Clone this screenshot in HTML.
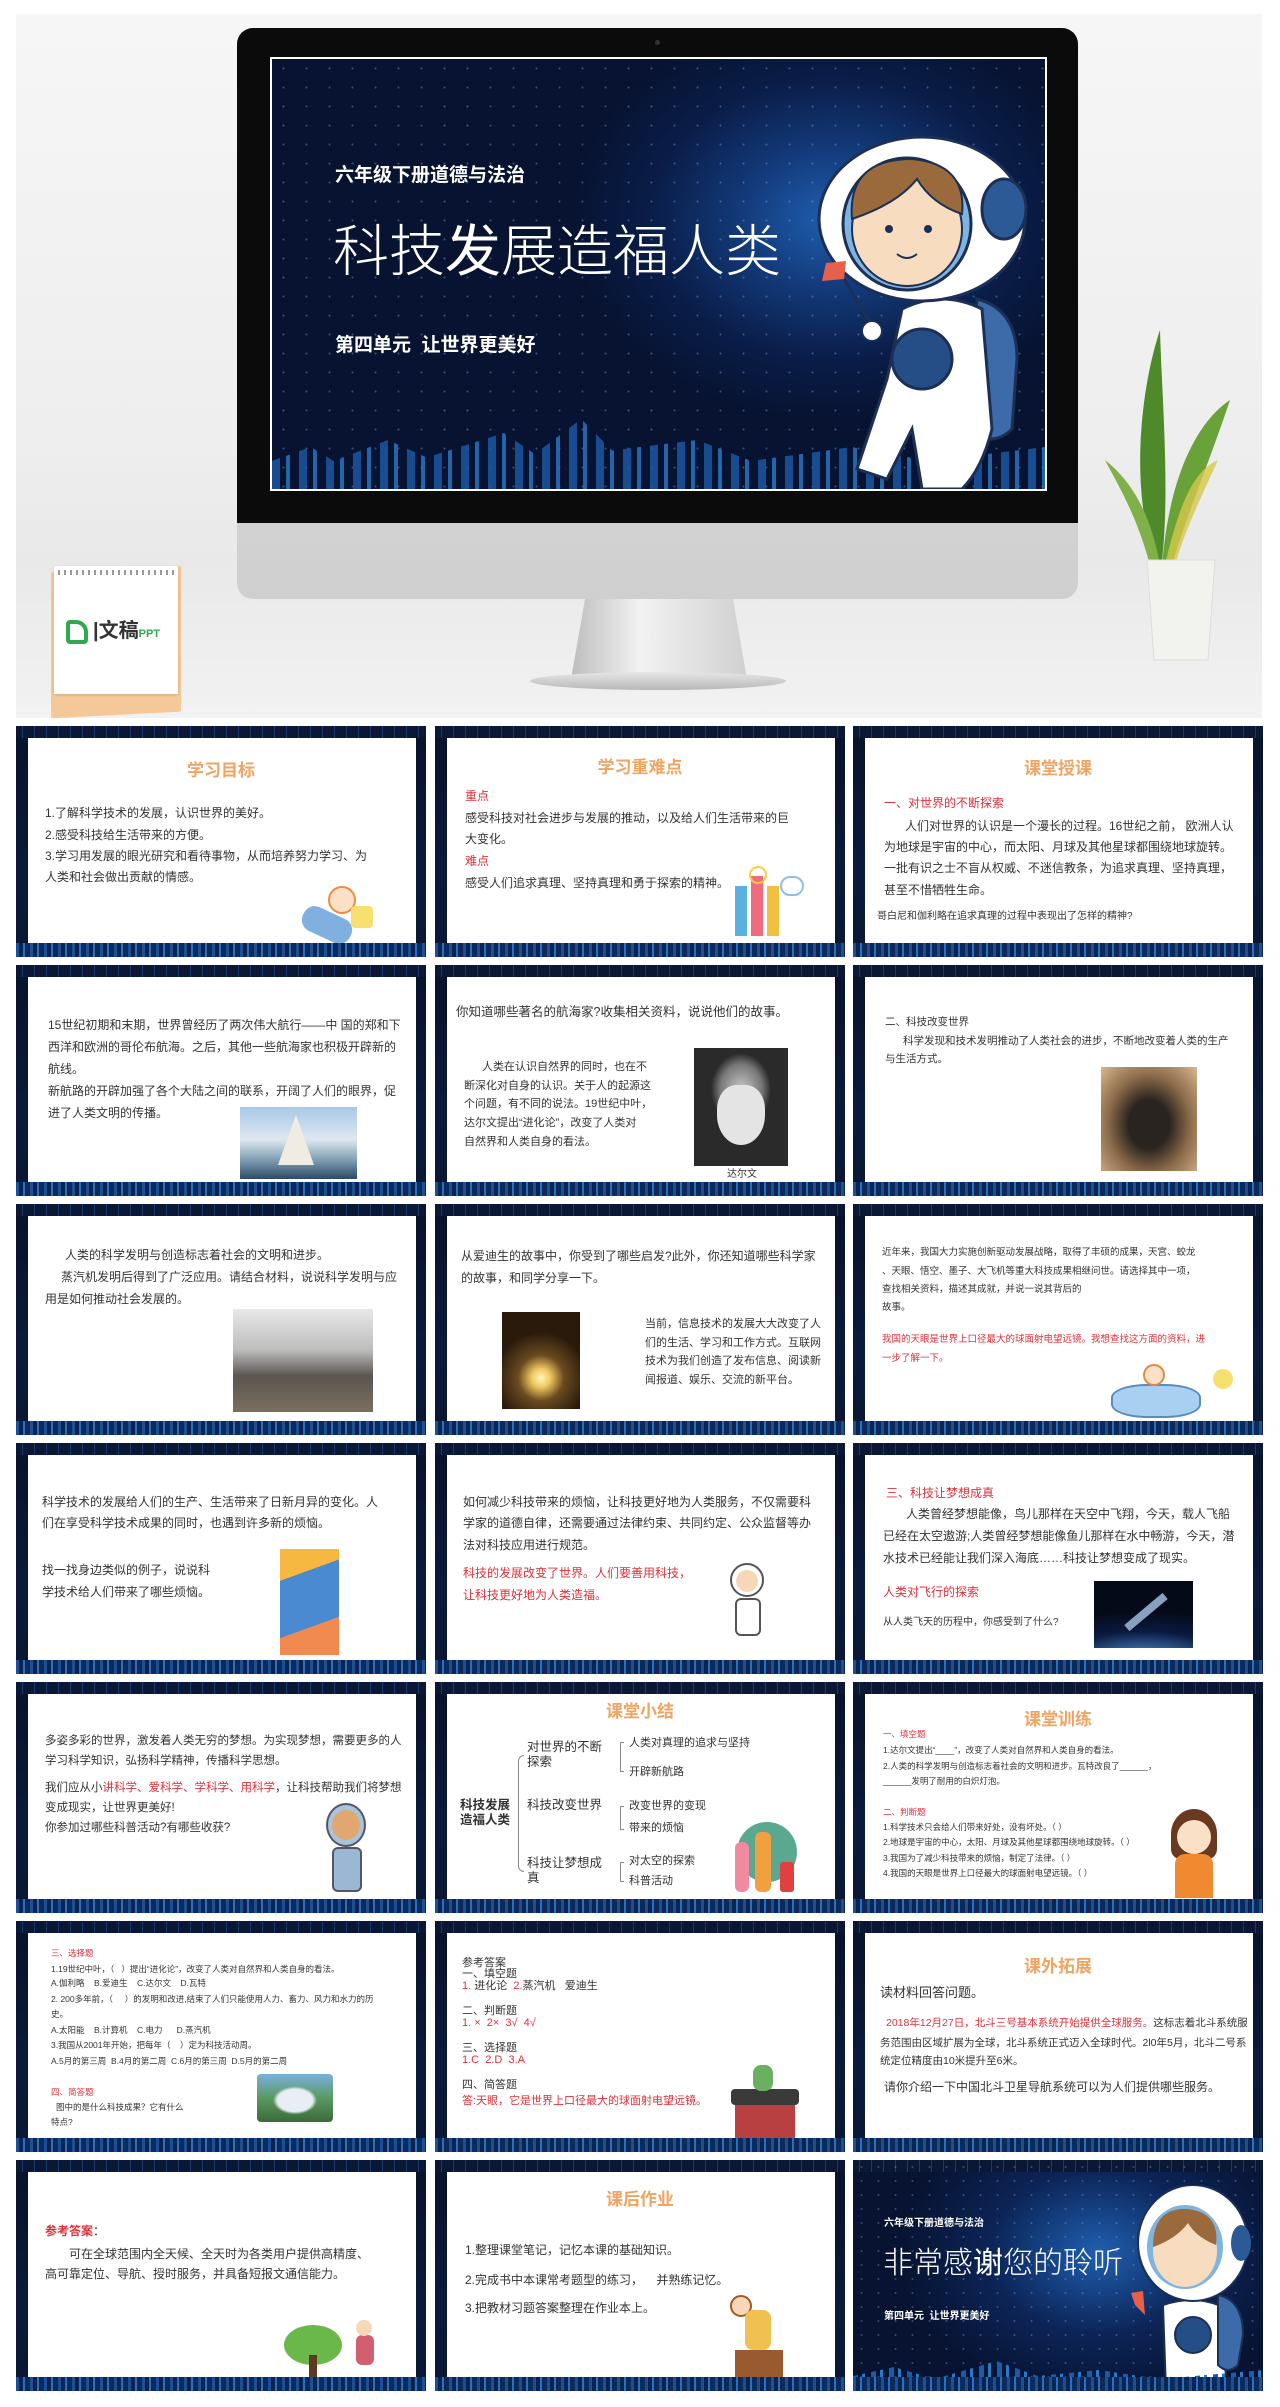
<!DOCTYPE html>
<html><head><meta charset="utf-8">
<style>
*{margin:0;padding:0;box-sizing:border-box}
body{width:1280px;height:2407px;background:#fff;position:relative;overflow:hidden;font-family:"Liberation Sans","Noto Sans CJK SC",sans-serif;color:#333}
.abs{position:absolute}
.hero{position:absolute;left:16px;top:14px;width:1246px;height:704px;background:linear-gradient(#f6f6f6 0%,#eeeeee 60%,#e9e9e9 78%,#f2f2f2 100%)}
.s{position:absolute;width:410px;height:231px;background:linear-gradient(#08122a,#0b1a3a 60%,#0a1834);overflow:hidden}
.s:before{content:"";position:absolute;left:0;right:0;top:0;height:12px;background:repeating-linear-gradient(90deg,#0a1836 0 6px,#1a3a70 6px 7px,#0a1836 7px 12px)}
.s:after{content:"";position:absolute;left:0;right:0;bottom:0;height:14px;background:repeating-linear-gradient(90deg,#1b4f96 0 3px,#0d2450 3px 7px,#2a70c0 7px 9px,#0e2a5a 9px 14px)}
.w{position:absolute;left:12px;top:12px;width:388px;height:208px;background:#fff}
.t{position:absolute;white-space:nowrap;line-height:16px;font-size:12px;color:#333}
.ti{position:absolute;left:0;width:410px;text-align:center;font-size:17px;font-weight:bold;color:#f0a462;line-height:20px}
.r{color:#e0303a}
.sm{font-size:10px}
.xs{font-size:8.5px}
</style></head><body>

<div class="hero"></div>
<div class="abs" style="left:51px;top:569px;width:130px;height:146px;background:#f5c89a;transform:skewY(-3deg);border-radius:2px"></div>
<div class="abs" style="left:54px;top:566px;width:124px;height:128px;background:#fff;box-shadow:0 1px 3px rgba(0,0,0,.15)"></div>
<div class="abs" style="left:58px;top:570px;width:116px;height:5px;background:repeating-linear-gradient(90deg,#999 0 2px,transparent 2px 6px)"></div>
<div class="abs" style="left:66px;top:620px;width:22px;height:24px;border:4px solid #2fa84f;border-radius:4px 12px 4px 4px"></div>
<div class="abs" style="left:93px;top:614px;font-size:20px;font-weight:bold;color:#333">|文稿<span style="font-size:11px;color:#2fa84f">PPT</span></div>
<svg class="abs" style="left:1100px;top:310px" width="140" height="360">
<path d="M55 250 C30 180 40 80 60 20 C62 90 70 180 62 250Z" fill="#4f8a2a"/>
<path d="M62 255 C70 160 100 110 130 90 C110 150 85 210 72 255Z" fill="#6aa23a"/>
<path d="M50 255 C35 200 15 170 5 150 C30 170 50 200 60 255Z" fill="#7fb04a"/>
<path d="M65 255 C80 190 95 160 118 150 C100 190 85 220 75 255Z" fill="#d6c84a" opacity=".8"/>
<path d="M47 250 L115 250 L108 350 L54 350Z" fill="#f2f2ee" stroke="#ddd"/>
</svg>
<div class="abs" style="left:237px;top:28px;width:841px;height:571px;border-radius:16px;background:linear-gradient(#e8e8e8,#cfcfcf)"></div>
<div class="abs" style="left:237px;top:28px;width:841px;height:495px;border-radius:16px 16px 0 0;background:#0b0b0b"></div>
<div class="abs" style="left:655px;top:40px;width:5px;height:5px;border-radius:50%;background:#333"></div>
<div class="abs" style="left:571px;top:599px;width:176px;height:80px;background:linear-gradient(90deg,#bdbdbd,#f2f2f2 40%,#d0d0d0);clip-path:polygon(8% 0,92% 0,100% 100%,0 100%)"></div>
<div class="abs" style="left:530px;top:672px;width:256px;height:18px;border-radius:50%;background:linear-gradient(#e6e6e6,#b8b8b8)"></div>
<div class="abs" style="left:270px;top:57px;width:777px;height:434px;background:#fff"></div>
<div class="abs" style="left:272px;top:59px;width:773px;height:430px;overflow:hidden;background:radial-gradient(ellipse 260px 200px at 560px 160px,#1f5fb0 0%,#133a7a 35%,#0a1d48 70%,#071331 100%)">
 <div class="abs" style="left:0;top:0;width:773px;height:430px;background-image:radial-gradient(#8fb8ff 1px,transparent 1.3px);background-size:23px 19px;opacity:.35"></div>
 <div class="abs" style="left:0;bottom:0;width:773px;height:70px;background:repeating-linear-gradient(90deg,#1d5ba8 0 8px,transparent 8px 14px,#2a78c8 14px 18px,transparent 18px 27px);clip-path:polygon(0 60%,5% 40%,8% 60%,15% 30%,20% 55%,30% 20%,34% 50%,40% 0,44% 45%,55% 30%,62% 60%,75% 40%,85% 60%,100% 40%,100% 100%,0 100%);opacity:.8"></div>
 <div class="abs" style="left:63px;top:105px;color:#fff;font-size:19px;font-weight:bold;line-height:24px">六年级下册道德与法治</div>
 <div class="abs" style="left:61px;top:160px;color:#fff;font-size:56px;line-height:66px;font-weight:300;white-space:nowrap">科技<b>发</b>展造福人类</div>
 <div class="abs" style="left:63px;top:275px;color:#fff;font-size:19px;font-weight:bold;line-height:24px">第四单元&nbsp; 让世界更美好</div>
 <svg class="abs" style="left:500px;top:0" width="273" height="430">
  <path d="M205 240 q40 10 40 60 l-5 70 q-20 20 -45 0z" fill="#3d6aa8" stroke="#1c2f55" stroke-width="3"/>
  <path d="M130 250 q40 -20 80 0 l10 120 q-10 40 -30 60 l-40 0 l-10 -60 l-25 50 l-30 -10 l30 -90z" fill="#fff" stroke="#1c2f55" stroke-width="3"/>
  <circle cx="150" cy="300" r="30" fill="#264e86" stroke="#1c2f55" stroke-width="3"/>
  <ellipse cx="150" cy="160" rx="103" ry="82" fill="#fff" stroke="#1c2f55" stroke-width="3"/>
  <ellipse cx="232" cy="150" rx="22" ry="30" fill="#2c5a96" stroke="#1c2f55" stroke-width="3"/>
  <ellipse cx="135" cy="165" rx="64" ry="66" fill="#7fb3e0" stroke="#1c2f55" stroke-width="3"/>
  <ellipse cx="135" cy="170" rx="55" ry="57" fill="#f7dcc0" stroke="#1c2f55" stroke-width="2"/>
  <path d="M80 160 q-5 -60 60 -60 q55 5 50 55 q-30 -10 -45 -35 q-20 25 -65 40z" fill="#9a6a3c" stroke="#1c2f55" stroke-width="2"/>
  <circle cx="117" cy="170" r="4" fill="#1c2f55"/><circle cx="156" cy="170" r="4" fill="#1c2f55"/>
  <path d="M125 195 q10 8 20 0" stroke="#1c2f55" stroke-width="2" fill="none"/>
  <path d="M102 270 l-30 -50" stroke="#1c2f55" stroke-width="3"/>
  <path d="M72 220 l-22 2 l4 -18 l20 -2z" fill="#e8604a"/>
  <circle cx="100" cy="272" r="10" fill="#fff" stroke="#1c2f55" stroke-width="2"/>
 </svg>
</div>

<div class="s" style="left:16px;top:726px"><div class="w"></div>
 <div class="ti" style="top:35px">学习目标</div>
 <div class="t" style="left:29px;top:79px">1.了解科学技术的发展，认识世界的美好。</div>
 <div class="t" style="left:29px;top:101px">2.感受科技给生活带来的方便。</div>
 <div class="t" style="left:29px;top:122px">3.学习用发展的眼光研究和看待事物，从而培养努力学习、为</div>
 <div class="t" style="left:29px;top:143px">人类和社会做出贡献的情感。</div>
 <div class="abs" style="left:285px;top:186px;width:52px;height:26px;background:#7fb0e0;border-radius:12px;transform:rotate(25deg)"></div>
 <div class="abs" style="left:312px;top:160px;width:28px;height:28px;background:#fbe0c8;border-radius:50%;border:2px solid #f08a40"></div>
 <div class="abs" style="left:335px;top:180px;width:22px;height:22px;background:#f8e070;border-radius:4px"></div>
</div>
<div class="s" style="left:435px;top:726px"><div class="w"></div>
 <div class="ti" style="top:32px">学习重难点</div>
 <div class="t r" style="left:30px;top:62px">重点</div>
 <div class="t" style="left:30px;top:84px">感受科技对社会进步与发展的推动，以及给人们生活带来的巨</div>
 <div class="t" style="left:30px;top:105px">大变化。</div>
 <div class="t r" style="left:30px;top:127px">难点</div>
 <div class="t" style="left:30px;top:149px">感受人们追求真理、坚持真理和勇于探索的精神。</div>
 <div class="abs" style="left:300px;top:160px;width:12px;height:50px;background:#5ab0e0"></div>
 <div class="abs" style="left:316px;top:150px;width:12px;height:60px;background:#f06a80"></div>
 <div class="abs" style="left:332px;top:160px;width:12px;height:50px;background:#f0c040"></div>
 <div class="abs" style="left:345px;top:150px;width:24px;height:20px;border:2px solid #8ac0e8;border-radius:10px"></div>
 <div class="abs" style="left:314px;top:140px;width:18px;height:18px;border:2px solid #f5d040;border-radius:50%"></div>
</div>
<div class="s" style="left:853px;top:726px"><div class="w"></div>
 <div class="ti" style="top:33px">课堂授课</div>
 <div class="t r" style="left:31px;top:69px">一、对世界的不断探索</div>
 <div class="t" style="left:52px;top:92px">人们对世界的认识是一个漫长的过程。16世纪之前， 欧洲人认</div>
 <div class="t" style="left:31px;top:113px">为地球是宇宙的中心，而太阳、月球及其他星球都围绕地球旋转。</div>
 <div class="t" style="left:31px;top:134px">一批有识之士不盲从权威、不迷信教条，为追求真理、坚持真理，</div>
 <div class="t" style="left:31px;top:156px">甚至不惜牺牲生命。</div>
 <div class="t sm" style="left:24px;top:183px">哥白尼和伽利略在追求真理的过程中表现出了怎样的精神?</div>
</div>

<div class="s" style="left:16px;top:965px"><div class="w"></div>
 <div class="t" style="left:32px;top:52px">15世纪初期和末期，世界曾经历了两次伟大航行——中 国的郑和下</div>
 <div class="t" style="left:32px;top:74px">西洋和欧洲的哥伦布航海。之后，其他一些航海家也积极开辟新的</div>
 <div class="t" style="left:32px;top:96px">航线。</div>
 <div class="t" style="left:32px;top:118px">新航路的开辟加强了各个大陆之间的联系，开阔了人们的眼界，促</div>
 <div class="t" style="left:32px;top:140px">进了人类文明的传播。</div>
 <div class="abs" style="left:224px;top:142px;width:117px;height:72px;background:linear-gradient(#a8c8e8,#dfe8f0 45%,#7a9ab0 75%,#2d4a66)"></div>
 <div class="abs" style="left:262px;top:150px;width:36px;height:50px;background:#f0ece4;clip-path:polygon(50% 0,100% 100%,0 100%)"></div>
</div>
<div class="s" style="left:435px;top:965px"><div class="w"></div>
 <div class="t" style="left:21px;top:39px;font-size:12.5px">你知道哪些著名的航海家?收集相关资料，说说他们的故事。</div>
 <div class="t" style="left:47px;top:94px;font-size:11px">人类在认识自然界的同时，也在不</div>
 <div class="t" style="left:29px;top:113px;font-size:11px">断深化对自身的认识。关于人的起源这</div>
 <div class="t" style="left:29px;top:131px;font-size:11px">个问题，有不同的说法。19世纪中叶，</div>
 <div class="t" style="left:29px;top:150px;font-size:11px">达尔文提出“进化论”，改变了人类对</div>
 <div class="t" style="left:29px;top:169px;font-size:11px">自然界和人类自身的看法。</div>
 <div class="abs" style="left:259px;top:83px;width:94px;height:118px;background:radial-gradient(ellipse 30px 36px at 50% 35%,#c8c8c8,#777 70%,#2a2a2a 100%)"></div>
 <div class="abs" style="left:282px;top:120px;width:48px;height:60px;background:#e4e4e4;border-radius:40% 40% 50% 50%"></div>
 <div class="t sm" style="left:292px;top:202px">达尔文</div>
</div>
<div class="s" style="left:853px;top:965px"><div class="w"></div>
 <div class="t" style="left:32px;top:49px;font-size:10.5px">二、科技改变世界</div>
 <div class="t" style="left:50px;top:68px;font-size:10.5px">科学发现和技术发明推动了人类社会的进步，不断地改变着人类的生产</div>
 <div class="t" style="left:32px;top:86px;font-size:10.5px">与生活方式。</div>
 <div class="abs" style="left:248px;top:102px;width:96px;height:104px;background:radial-gradient(ellipse at 50% 55%,#2a2420 30%,#8a6a48 60%,#d8b890 100%)"></div>
</div>

<div class="s" style="left:16px;top:1204px"><div class="w"></div>
 <div class="t" style="left:49px;top:43px">人类的科学发明与创造标志着社会的文明和进步。</div>
 <div class="t" style="left:45px;top:65px">蒸汽机发明后得到了广泛应用。请结合材料，说说科学发明与应</div>
 <div class="t" style="left:29px;top:87px">用是如何推动社会发展的。</div>
 <div class="abs" style="left:217px;top:105px;width:140px;height:103px;background:linear-gradient(#e8e8e8,#bcbcbc 40%,#5a5550 65%,#7a7060)"></div>
</div>
<div class="s" style="left:435px;top:1204px"><div class="w"></div>
 <div class="t" style="left:26px;top:44px;font-size:12px">从爱迪生的故事中，你受到了哪些启发?此外，你还知道哪些科学家</div>
 <div class="t" style="left:26px;top:66px;font-size:12px">的故事，和同学分享一下。</div>
 <div class="abs" style="left:67px;top:108px;width:78px;height:97px;background:radial-gradient(circle at 50% 68%,#fff6c0 0,#f0c860 12%,#6a4a20 30%,#2a1a0c 60%)"></div>
 <div class="t" style="left:210px;top:112px;font-size:11px">当前，信息技术的发展大大改变了人</div>
 <div class="t" style="left:210px;top:131px;font-size:11px">们的生活、学习和工作方式。互联网</div>
 <div class="t" style="left:210px;top:149px;font-size:11px">技术为我们创造了发布信息、阅读新</div>
 <div class="t" style="left:210px;top:168px;font-size:11px">闻报道、娱乐、交流的新平台。</div>
</div>
<div class="s" style="left:853px;top:1204px"><div class="w"></div>
 <div class="t sm" style="left:29px;top:41px;font-size:9.5px">近年来，我国大力实施创新驱动发展战略，取得了丰硕的成果，天宫、蛟龙</div>
 <div class="t sm" style="left:29px;top:60px;font-size:9.5px">、天眼、悟空、墨子、大飞机等重大科技成果相继问世。请选择其中一项，</div>
 <div class="t sm" style="left:29px;top:78px;font-size:9.5px">查找相关资料，描述其成就，并说一说其背后的</div>
 <div class="t sm" style="left:29px;top:96px;font-size:9.5px">故事。</div>
 <div class="t sm r" style="left:29px;top:128px;font-size:9.5px">我国的天眼是世界上口径最大的球面射电望远镜。我想查找这方面的资料，进</div>
 <div class="t sm r" style="left:29px;top:147px;font-size:9.5px">一步了解一下。</div>
 <div class="abs" style="left:258px;top:180px;width:90px;height:34px;background:#a8d0f0;border-radius:40%;border:2px solid #5a8ac0"></div>
 <div class="abs" style="left:290px;top:160px;width:22px;height:22px;background:#fbe0c8;border-radius:50%;border:2px solid #e08a40"></div>
 <div class="abs" style="left:360px;top:165px;width:20px;height:20px;background:#f8e070;border-radius:50%"></div>
</div>

<div class="s" style="left:16px;top:1443px"><div class="w"></div>
 <div class="t" style="left:26px;top:51px;font-size:12px">科学技术的发展给人们的生产、生活带来了日新月异的变化。人</div>
 <div class="t" style="left:26px;top:72px;font-size:12px">们在享受科学技术成果的同时，也遇到许多新的烦恼。</div>
 <div class="t" style="left:26px;top:119px">找一找身边类似的例子，说说科</div>
 <div class="t" style="left:26px;top:141px">学技术给人们带来了哪些烦恼。</div>
 <div class="abs" style="left:264px;top:106px;width:59px;height:106px;background:linear-gradient(160deg,#f6b840 0 25%,#4a8ad0 25% 70%,#f08a50 70%)"></div>
</div>
<div class="s" style="left:435px;top:1443px"><div class="w"></div>
 <div class="t" style="left:28px;top:51px;font-size:12px">如何减少科技带来的烦恼，让科技更好地为人类服务，不仅需要科</div>
 <div class="t" style="left:28px;top:72px;font-size:12px">学家的道德自律，还需要通过法律约束、共同约定、公众监督等办</div>
 <div class="t" style="left:28px;top:94px;font-size:12px">法对科技应用进行规范。</div>
 <div class="t r" style="left:28px;top:122px;font-size:12px">科技的发展改变了世界。人们要善用科技，</div>
 <div class="t r" style="left:28px;top:144px;font-size:12px">让科技更好地为人类造福。</div>
 <div class="abs" style="left:295px;top:120px;width:34px;height:34px;background:#fff;border:2px solid #555;border-radius:50%"></div>
 <div class="abs" style="left:301px;top:127px;width:22px;height:22px;background:#f6d8b8;border-radius:50%"></div>
 <div class="abs" style="left:300px;top:155px;width:26px;height:38px;background:#fff;border:2px solid #555;border-radius:6px"></div>
</div>
<div class="s" style="left:853px;top:1443px"><div class="w"></div>
 <div class="t r" style="left:33px;top:42px">三、科技让梦想成真</div>
 <div class="t" style="left:53px;top:63px">人类曾经梦想能像，鸟儿那样在天空中飞翔，今天，载人飞船</div>
 <div class="t" style="left:30px;top:85px">已经在太空遨游;人类曾经梦想能像鱼儿那样在水中畅游，今天，潜</div>
 <div class="t" style="left:30px;top:107px">水技术已经能让我们深入海底……科技让梦想变成了现实。</div>
 <div class="t r" style="left:30px;top:141px">人类对飞行的探索</div>
 <div class="t sm" style="left:30px;top:172px">从人类飞天的历程中，你感受到了什么?</div>
 <div class="abs" style="left:241px;top:138px;width:99px;height:67px;background:radial-gradient(ellipse 140px 50px at 50% 120%,#5a9ae0,#0a1a40 60%,#050a18)"></div>
 <div class="abs" style="left:268px;top:165px;width:50px;height:8px;background:#8aa0c0;transform:rotate(-40deg)"></div>
</div>

<div class="s" style="left:16px;top:1682px"><div class="w"></div>
 <div class="t" style="left:29px;top:51px;font-size:11.5px">多姿多彩的世界，激发着人类无穷的梦想。为实现梦想，需要更多的人</div>
 <div class="t" style="left:29px;top:71px;font-size:11.5px">学习科学知识，弘扬科学精神，传播科学思想。</div>
 <div class="t" style="left:29px;top:98px;font-size:11.5px">我们应从小<span class="r">讲科学、爱科学、学科学、用科学</span>，让科技帮助我们将梦想</div>
 <div class="t" style="left:29px;top:118px;font-size:11.5px">变成现实，让世界更美好!</div>
 <div class="t" style="left:29px;top:138px;font-size:11.5px">你参加过哪些科普活动?有哪些收获?</div>
 <div class="abs" style="left:310px;top:121px;width:40px;height:44px;background:#a8c4dc;border:2px solid #556;border-radius:50%"></div>
 <div class="abs" style="left:316px;top:128px;width:28px;height:30px;background:#e0a870;border-radius:50%"></div>
 <div class="abs" style="left:316px;top:165px;width:30px;height:45px;background:#9ab8d4;border:2px solid #556;border-radius:6px"></div>
</div>
<div class="s" style="left:435px;top:1682px"><div class="w"></div>
 <div class="ti" style="top:20px">课堂小结</div>
 <div class="t" style="left:25px;top:115px;font-weight:bold;font-size:12.5px">科技发展</div>
 <div class="t" style="left:25px;top:130px;font-weight:bold;font-size:12.5px">造福人类</div>
 <div class="abs" style="left:83px;top:73px;width:6px;height:117px;border:1px solid #888;border-right:none;border-radius:6px 0 0 6px"></div>
 <div class="t" style="left:92px;top:57px;font-size:12.5px">对世界的不断</div>
 <div class="t" style="left:92px;top:72px;font-size:12.5px">探索</div>
 <div class="t" style="left:92px;top:115px;font-size:12.5px">科技改变世界</div>
 <div class="t" style="left:92px;top:173px;font-size:12.5px">科技让梦想成</div>
 <div class="t" style="left:92px;top:188px;font-size:12.5px">真</div>
 <div class="abs" style="left:185px;top:60px;width:4px;height:30px;border:1px solid #888;border-right:none"></div>
 <div class="abs" style="left:185px;top:124px;width:4px;height:24px;border:1px solid #888;border-right:none"></div>
 <div class="abs" style="left:185px;top:180px;width:4px;height:20px;border:1px solid #888;border-right:none"></div>
 <div class="t" style="left:194px;top:53px;font-size:11px">人类对真理的追求与坚持</div>
 <div class="t" style="left:194px;top:82px;font-size:11px">开辟新航路</div>
 <div class="t" style="left:194px;top:116px;font-size:11px">改变世界的变现</div>
 <div class="t" style="left:194px;top:138px;font-size:11px">带来的烦恼</div>
 <div class="t" style="left:194px;top:171px;font-size:11px">对太空的探索</div>
 <div class="t" style="left:194px;top:191px;font-size:11px">科普活动</div>
 <div class="abs" style="left:302px;top:140px;width:60px;height:60px;background:#5aa890;border-radius:50%"></div>
 <div class="abs" style="left:300px;top:160px;width:14px;height:50px;background:#f08aa0;border-radius:6px"></div>
 <div class="abs" style="left:320px;top:150px;width:16px;height:60px;background:#f0a040;border-radius:6px"></div>
 <div class="abs" style="left:345px;top:180px;width:14px;height:30px;background:#e04040;border-radius:3px"></div>
</div>
<div class="s" style="left:853px;top:1682px"><div class="w"></div>
 <div class="ti" style="top:28px">课堂训练</div>
 <div class="t xs r" style="left:30px;top:44px">一、填空题</div>
 <div class="t xs" style="left:30px;top:60px">1.达尔文提出“____”，改变了人类对自然界和人类自身的看法。</div>
 <div class="t xs" style="left:30px;top:76px">2.人类的科学发明与创造标志着社会的文明和进步。瓦特改良了______，</div>
 <div class="t xs" style="left:30px;top:91px">______发明了耐用的白炽灯泡。</div>
 <div class="t xs r" style="left:30px;top:122px">二、判断题</div>
 <div class="t xs" style="left:30px;top:137px">1.科学技术只会给人们带来好处，没有坏处。（ ）</div>
 <div class="t xs" style="left:30px;top:152px">2.地球是宇宙的中心，太阳、月球及其他星球都围绕地球旋转。（ ）</div>
 <div class="t xs" style="left:30px;top:168px">3.我国为了减少科技带来的烦恼，制定了法律。（ ）</div>
 <div class="t xs" style="left:30px;top:183px">4.我国的天眼是世界上口径最大的球面射电望远镜。（ ）</div>
 <div class="abs" style="left:318px;top:127px;width:46px;height:50px;background:#6a3a20;border-radius:50% 50% 20% 20%"></div>
 <div class="abs" style="left:324px;top:138px;width:34px;height:34px;background:#fbe0c8;border-radius:50%"></div>
 <div class="abs" style="left:322px;top:172px;width:38px;height:44px;background:#f08a30;border-radius:10px 10px 0 0"></div>
</div>

<div class="s" style="left:16px;top:1921px"><div class="w"></div>
 <div class="t xs r" style="left:35px;top:24px">三、选择题</div>
 <div class="t xs" style="left:35px;top:40px">1.19世纪中叶，（&nbsp;&nbsp; ）提出“进化论”，改变了人类对自然界和人类自身的看法。</div>
 <div class="t xs" style="left:35px;top:54px">A.伽利略&nbsp;&nbsp;&nbsp; B.爱迪生&nbsp;&nbsp;&nbsp; C.达尔文&nbsp;&nbsp;&nbsp; D.瓦特</div>
 <div class="t xs" style="left:35px;top:70px">2. 200多年前，（&nbsp;&nbsp;&nbsp;&nbsp; ）的发明和改进,结束了人们只能使用人力、畜力、风力和水力的历</div>
 <div class="t xs" style="left:35px;top:85px">史。</div>
 <div class="t xs" style="left:35px;top:101px">A.太阳能&nbsp;&nbsp;&nbsp; B.计算机&nbsp;&nbsp;&nbsp; C.电力&nbsp;&nbsp;&nbsp;&nbsp;&nbsp; D.蒸汽机</div>
 <div class="t xs" style="left:35px;top:116px">3.我国从2001年开始，把每年（&nbsp;&nbsp;&nbsp; ）定为科技活动周。</div>
 <div class="t xs" style="left:35px;top:132px">A.5月的第三周&nbsp; B.4月的第二周&nbsp; C.6月的第三周&nbsp; D.5月的第二周</div>
 <div class="t xs r" style="left:35px;top:163px">四、简答题</div>
 <div class="t xs" style="left:40px;top:178px">图中的是什么科技成果？它有什么</div>
 <div class="t xs" style="left:35px;top:193px">特点?</div>
 <div class="abs" style="left:241px;top:153px;width:76px;height:48px;background:radial-gradient(ellipse 22px 14px at 50% 55%,#e8eef4 80%,transparent 100%),linear-gradient(#7ab0e0,#5a9a60 50%,#3a6a38);border-radius:4px"></div>
</div>
<div class="s" style="left:435px;top:1921px"><div class="w"></div>
 <div class="t" style="left:27px;top:34px;font-size:11px">参考答案</div>
 <div class="t" style="left:27px;top:45px;font-size:11px">一、填空题</div>
 <div class="t" style="left:27px;top:57px;font-size:11px"><span class="r">1.</span> 进化论&nbsp; <span class="r">2.</span>蒸汽机&nbsp;&nbsp; 爱迪生</div>
 <div class="t" style="left:27px;top:82px;font-size:11px">二、判断题</div>
 <div class="t r" style="left:27px;top:94px;font-size:11px">1. ×&nbsp; 2×&nbsp; 3√&nbsp; 4√</div>
 <div class="t" style="left:27px;top:119px;font-size:11px">三、选择题</div>
 <div class="t r" style="left:27px;top:131px;font-size:11px">1.C&nbsp; 2.D&nbsp; 3.A</div>
 <div class="t" style="left:27px;top:156px;font-size:11px">四、简答题</div>
 <div class="t r" style="left:27px;top:172px;font-size:11px">答:天眼，它是世界上口径最大的球面射电望远镜。</div>
 <div class="abs" style="left:300px;top:180px;width:60px;height:40px;background:#b84040;border-radius:4px"></div>
 <div class="abs" style="left:296px;top:168px;width:68px;height:16px;background:#3a3a3a;border-radius:4px"></div>
 <div class="abs" style="left:318px;top:144px;width:20px;height:26px;background:#6ab060;border-radius:8px"></div>
</div>
<div class="s" style="left:853px;top:1921px"><div class="w"></div>
 <div class="ti" style="top:36px">课外拓展</div>
 <div class="t" style="left:27px;top:64px;font-size:13px">读材料回答问题。</div>
 <div class="t" style="left:33px;top:94px;font-size:10.5px"><span class="r">2018年12月27日，北斗三号基本系统开始提供全球服务。</span>这标志着北斗系统服</div>
 <div class="t" style="left:27px;top:114px;font-size:10.5px">务范围由区域扩展为全球，北斗系统正式迈入全球时代。2l0年5月，北斗二号系</div>
 <div class="t" style="left:27px;top:132px;font-size:10.5px">统定位精度由10米提升至6米。</div>
 <div class="t" style="left:31px;top:158px;font-size:12px">请你介绍一下中国北斗卫星导航系统可以为人们提供哪些服务。</div>
</div>

<div class="s" style="left:16px;top:2160px"><div class="w"></div>
 <div class="t r" style="left:29px;top:63px;font-weight:bold">参考答案<span style="color:#333;font-weight:normal">：</span></div>
 <div class="t" style="left:53px;top:86px">可在全球范围内全天候、全天时为各类用户提供高精度、</div>
 <div class="t" style="left:29px;top:106px">高可靠定位、导航、授时服务，并具备短报文通信能力。</div>
 <div class="abs" style="left:268px;top:165px;width:58px;height:40px;background:#6ab84a;border-radius:50%"></div>
 <div class="abs" style="left:293px;top:195px;width:8px;height:36px;background:#5a3a20"></div>
 <div class="abs" style="left:340px;top:175px;width:18px;height:30px;background:#d06070;border-radius:6px"></div>
 <div class="abs" style="left:340px;top:160px;width:16px;height:16px;background:#f6d8b8;border-radius:50%"></div>
</div>
<div class="s" style="left:435px;top:2160px"><div class="w"></div>
 <div class="ti" style="top:30px">课后作业</div>
 <div class="t" style="left:30px;top:82px">1.整理课堂笔记，记忆本课的基础知识。</div>
 <div class="t" style="left:30px;top:112px">2.完成书中本课常考题型的练习，&nbsp;&nbsp;&nbsp; 并熟练记忆。</div>
 <div class="t" style="left:30px;top:140px">3.把教材习题答案整理在作业本上。</div>
 <div class="abs" style="left:295px;top:135px;width:22px;height:22px;background:#f6d8b8;border-radius:50%;border:2px solid #a05a20"></div>
 <div class="abs" style="left:310px;top:150px;width:26px;height:40px;background:#f0c050;border-radius:8px"></div>
 <div class="abs" style="left:300px;top:190px;width:48px;height:30px;background:#9a5a30"></div>
</div>
<div class="s" style="left:853px;top:2160px;background:radial-gradient(ellipse 200px 150px at 60% 40%,#1f5fb0,#0c2456 55%,#071331)">
 <div class="abs" style="left:0;top:0;width:410px;height:231px;background-image:radial-gradient(#8fb8ff 1px,transparent 1.3px);background-size:17px 14px;opacity:.3"></div>
 <div class="abs" style="left:31px;top:57px;color:#fff;font-size:10px;font-weight:bold;line-height:14px">六年级下册道德与法治</div>
 <div class="abs" style="left:30px;top:84px;color:#fff;font-size:30px;line-height:40px;font-weight:300;white-space:nowrap">非常感<b>谢</b>您的聆听</div>
 <div class="abs" style="left:31px;top:150px;color:#fff;font-size:10px;font-weight:bold;line-height:14px">第四单元&nbsp; 让世界更美好</div>
 <svg class="abs" style="left:270px;top:25px" width="140" height="206">
  <path d="M40 120 q30 -10 55 0 l8 70 l-20 16 l-40 0 z" fill="#fff" stroke="#1c2f55" stroke-width="2"/>
  <path d="M95 110 q25 5 25 40 l-5 30 q-10 10 -20 0z" fill="#3d6aa8" stroke="#1c2f55" stroke-width="2"/>
  <circle cx="70" cy="150" r="18" fill="#264e86" stroke="#1c2f55" stroke-width="2"/>
  <ellipse cx="70" cy="58" rx="55" ry="58" fill="#fff" stroke="#1c2f55" stroke-width="2"/>
  <ellipse cx="118" cy="58" rx="10" ry="18" fill="#2c5a96"/>
  <ellipse cx="62" cy="62" rx="38" ry="42" fill="#7fb3e0"/>
  <ellipse cx="62" cy="66" rx="32" ry="36" fill="#f7dcc0"/>
  <path d="M30 62 q0 -40 35 -38 q32 4 28 36 q-20 -8 -28 -22 q-12 16 -35 24z" fill="#9a6a3c"/>
  <path d="M22 130 l-10 -10 l-4 -12 l12 -2z" fill="#e8604a"/>
 </svg>
 <div class="abs" style="left:0;bottom:0;width:410px;height:30px;background:repeating-linear-gradient(90deg,#1d5ba8 0 5px,transparent 5px 9px,#2a78c8 9px 12px,transparent 12px 18px);clip-path:polygon(0 50%,10% 20%,20% 60%,35% 0,45% 50%,60% 30%,75% 60%,100% 30%,100% 100%,0 100%)"></div>
</div>

</body></html>
